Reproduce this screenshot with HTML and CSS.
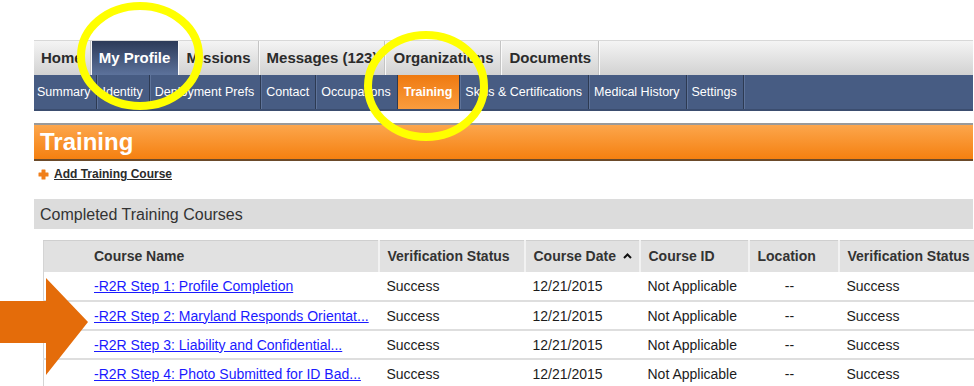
FILE: index.html
```html
<!DOCTYPE html>
<html lang="en">
<head>
    <meta charset="UTF-8">
    <title>Training</title>
    <link rel="stylesheet" href="styles.css">
</head>
<body>
    <div class="page">
        <ul class="main-nav">
            <li>Home</li>
            <li class="active">My Profile</li>
            <li>Missions</li>
            <li>Messages (123)</li>
            <li>Organizations</li>
            <li>Documents</li>
        </ul>
        <ul class="sub-nav">
            <li>Summary</li>
            <li>Identity</li>
            <li>Deployment Prefs</li>
            <li>Contact</li>
            <li>Occupations</li>
            <li class="active">Training</li>
            <li>Skills &amp; Certifications</li>
            <li>Medical History</li>
            <li>Settings</li>
        </ul>

        <h1 class="title-bar">Training</h1>

        <div class="add-link">
            <svg class="plus" width="11" height="11" viewBox="0 0 11 11">
                <path d="M4 0.5h3a0.5 0.5 0 0 1 0.5 0.5v2.5h2.5a0.5 0.5 0 0 1 0.5 0.5v3a0.5 0.5 0 0 1 -0.5 0.5h-2.5v2.5a0.5 0.5 0 0 1 -0.5 0.5h-3a0.5 0.5 0 0 1 -0.5 -0.5v-2.5h-2.5a0.5 0.5 0 0 1 -0.5 -0.5v-3a0.5 0.5 0 0 1 0.5 -0.5h2.5v-2.5a0.5 0.5 0 0 1 0.5 -0.5z" fill="#f07f1a"/>
            </svg>
            <a href="#">Add Training Course</a>
        </div>

        <div class="section-bar">Completed Training Courses</div>

        <table class="courses">
            <colgroup>
                <col style="width:335px">
                <col style="width:146px">
                <col style="width:115px">
                <col style="width:109px">
                <col style="width:90px">
                <col style="width:140px">
            </colgroup>
            <thead>
                <tr>
                    <th class="name">Course Name</th>
                    <th>Verification Status</th>
                    <th>Course Date
                        <svg class="sort" width="9" height="6" viewBox="0 0 9 6"><path d="M1 5l3.5-3.5 3.5 3.5" fill="none" stroke="#111" stroke-width="2"/></svg>
                    </th>
                    <th>Course ID</th>
                    <th>Location</th>
                    <th>Verification Status</th>
                </tr>
            </thead>
            <tbody>
                <tr>
                    <td class="name"><a href="#">-R2R Step 1: Profile Completion</a></td>
                    <td>Success</td>
                    <td>12/21/2015</td>
                    <td>Not Applicable</td>
                    <td class="loc">--</td>
                    <td>Success</td>
                </tr>
                <tr>
                    <td class="name"><a href="#">-R2R Step 2: Maryland Responds Orientat...</a></td>
                    <td>Success</td>
                    <td>12/21/2015</td>
                    <td>Not Applicable</td>
                    <td class="loc">--</td>
                    <td>Success</td>
                </tr>
                <tr>
                    <td class="name"><a href="#">-R2R Step 3: Liability and Confidential...</a></td>
                    <td>Success</td>
                    <td>12/21/2015</td>
                    <td>Not Applicable</td>
                    <td class="loc">--</td>
                    <td>Success</td>
                </tr>
                <tr>
                    <td class="name"><a href="#">-R2R Step 4: Photo Submitted for ID Bad...</a></td>
                    <td>Success</td>
                    <td>12/21/2015</td>
                    <td>Not Applicable</td>
                    <td class="loc">--</td>
                    <td>Success</td>
                </tr>
            </tbody>
        </table>
    </div>

    <!-- annotation marks drawn over the screenshot -->
    <svg class="marks" width="974" height="386" viewBox="0 0 974 386">
        <ellipse cx="140" cy="56" rx="59" ry="50" fill="none" stroke="#ffff00" stroke-width="8"/>
        <ellipse cx="426" cy="86" rx="58" ry="51" fill="none" stroke="#ffff00" stroke-width="8"/>
        <polygon points="0,301 46,301 46,278 88,322 46,375 46,343 0,343" fill="#e46c0a"/>
    </svg>
</body>
</html>
```

FILE: styles.css
```css
* {
    margin: 0;
    padding: 0;
    box-sizing: border-box;
}

body {
    font-family: "Liberation Sans", Arial, sans-serif;
    background: #fff;
    color: #222;
    width: 974px;
    height: 386px;
    overflow: hidden;
    position: relative;
}

.page {
    margin-left: 34px;
    padding-top: 40px;
    width: 939px;
}

/* top tabs */
.main-nav {
    list-style: none;
    display: flex;
    height: 35px;
    background: linear-gradient(#f4f4f4, #d2d2d2);
    border-top: 1px solid #d8d8d8;
}

.main-nav li {
    padding: 0 8px 0 7px;
    line-height: 34px;
    font-size: 15px;
    font-weight: bold;
    color: #2b2b2b;
    border-right: 1px solid #fafafa;
    box-shadow: inset -1px 0 0 #c4c4c4;
}

.main-nav li.active {
    background: linear-gradient(#2c3a58, #5c729b);
    color: #fff;
    box-shadow: none;
}

/* second row */
.sub-nav {
    list-style: none;
    display: flex;
    height: 36px;
    background: #475c83;
    border-bottom: 2px solid #3b4d6f;
}

.sub-nav li {
    padding: 0 6px 0 5px;
    line-height: 34px;
    font-size: 12.5px;
    color: #fff;
    border-right: 1px solid #2d3a52;
    box-shadow: 1px 0 0 #5e739a;
}

.sub-nav li:first-child {
    padding-left: 3px;
}

.sub-nav li.active {
    background: linear-gradient(#ef7a10, #fa9c3e);
    font-weight: bold;
    padding: 0 7px 0 6px;
}

/* page heading */
.title-bar {
    margin-top: 12px;
    height: 38px;
    background: linear-gradient(#fca64c, #f58010);
    border-top: 2px solid #9a9a9a;
    border-bottom: 2px solid #6b4a2a;
    color: #fff;
    font-size: 24px;
    font-weight: bold;
    line-height: 33px;
    padding-left: 6px;
}

.add-link {
    display: flex;
    align-items: center;
    gap: 5px;
    height: 26px;
    padding-left: 4px;
}

.add-link a {
    font-size: 12px;
    font-weight: bold;
    color: #2b2b2b;
}

.section-bar {
    margin-top: 12px;
    height: 30px;
    background: #dcdcdc;
    font-size: 16px;
    color: #333;
    line-height: 31px;
    padding-left: 6px;
}

/* course table */
.courses {
    margin-top: 11px;
    margin-left: 9px;
    border-collapse: collapse;
    table-layout: fixed;
    width: 935px;
    border-left: 1px solid #d4d4d4;
    border-top: 1px solid #cfcfcf;
    font-size: 14px;
}

.courses th {
    background: #e1e1e1;
    color: #333;
    font-weight: bold;
    text-align: left;
    height: 31px;
    padding: 0 8px;
    border-left: 2px solid #f2f2f2;
    white-space: nowrap;
}

.courses th:first-child {
    border-left: none;
}

.courses td {
    height: 29px;
    padding: 1px 8px 0;
    border-bottom: 2px solid #dedede;
    white-space: nowrap;
    overflow: hidden;
    color: #1c1c1c;
}

.courses .name {
    padding-left: 50px;
}

.courses td a {
    color: #1a1aff;
}

.courses td.loc {
    text-align: center;
    padding-right: 16px;
}

.sort {
    margin-left: 3px;
    vertical-align: 2px;
}

/* annotation overlay */
.marks {
    position: absolute;
    top: 0;
    left: 0;
    pointer-events: none;
}
```
